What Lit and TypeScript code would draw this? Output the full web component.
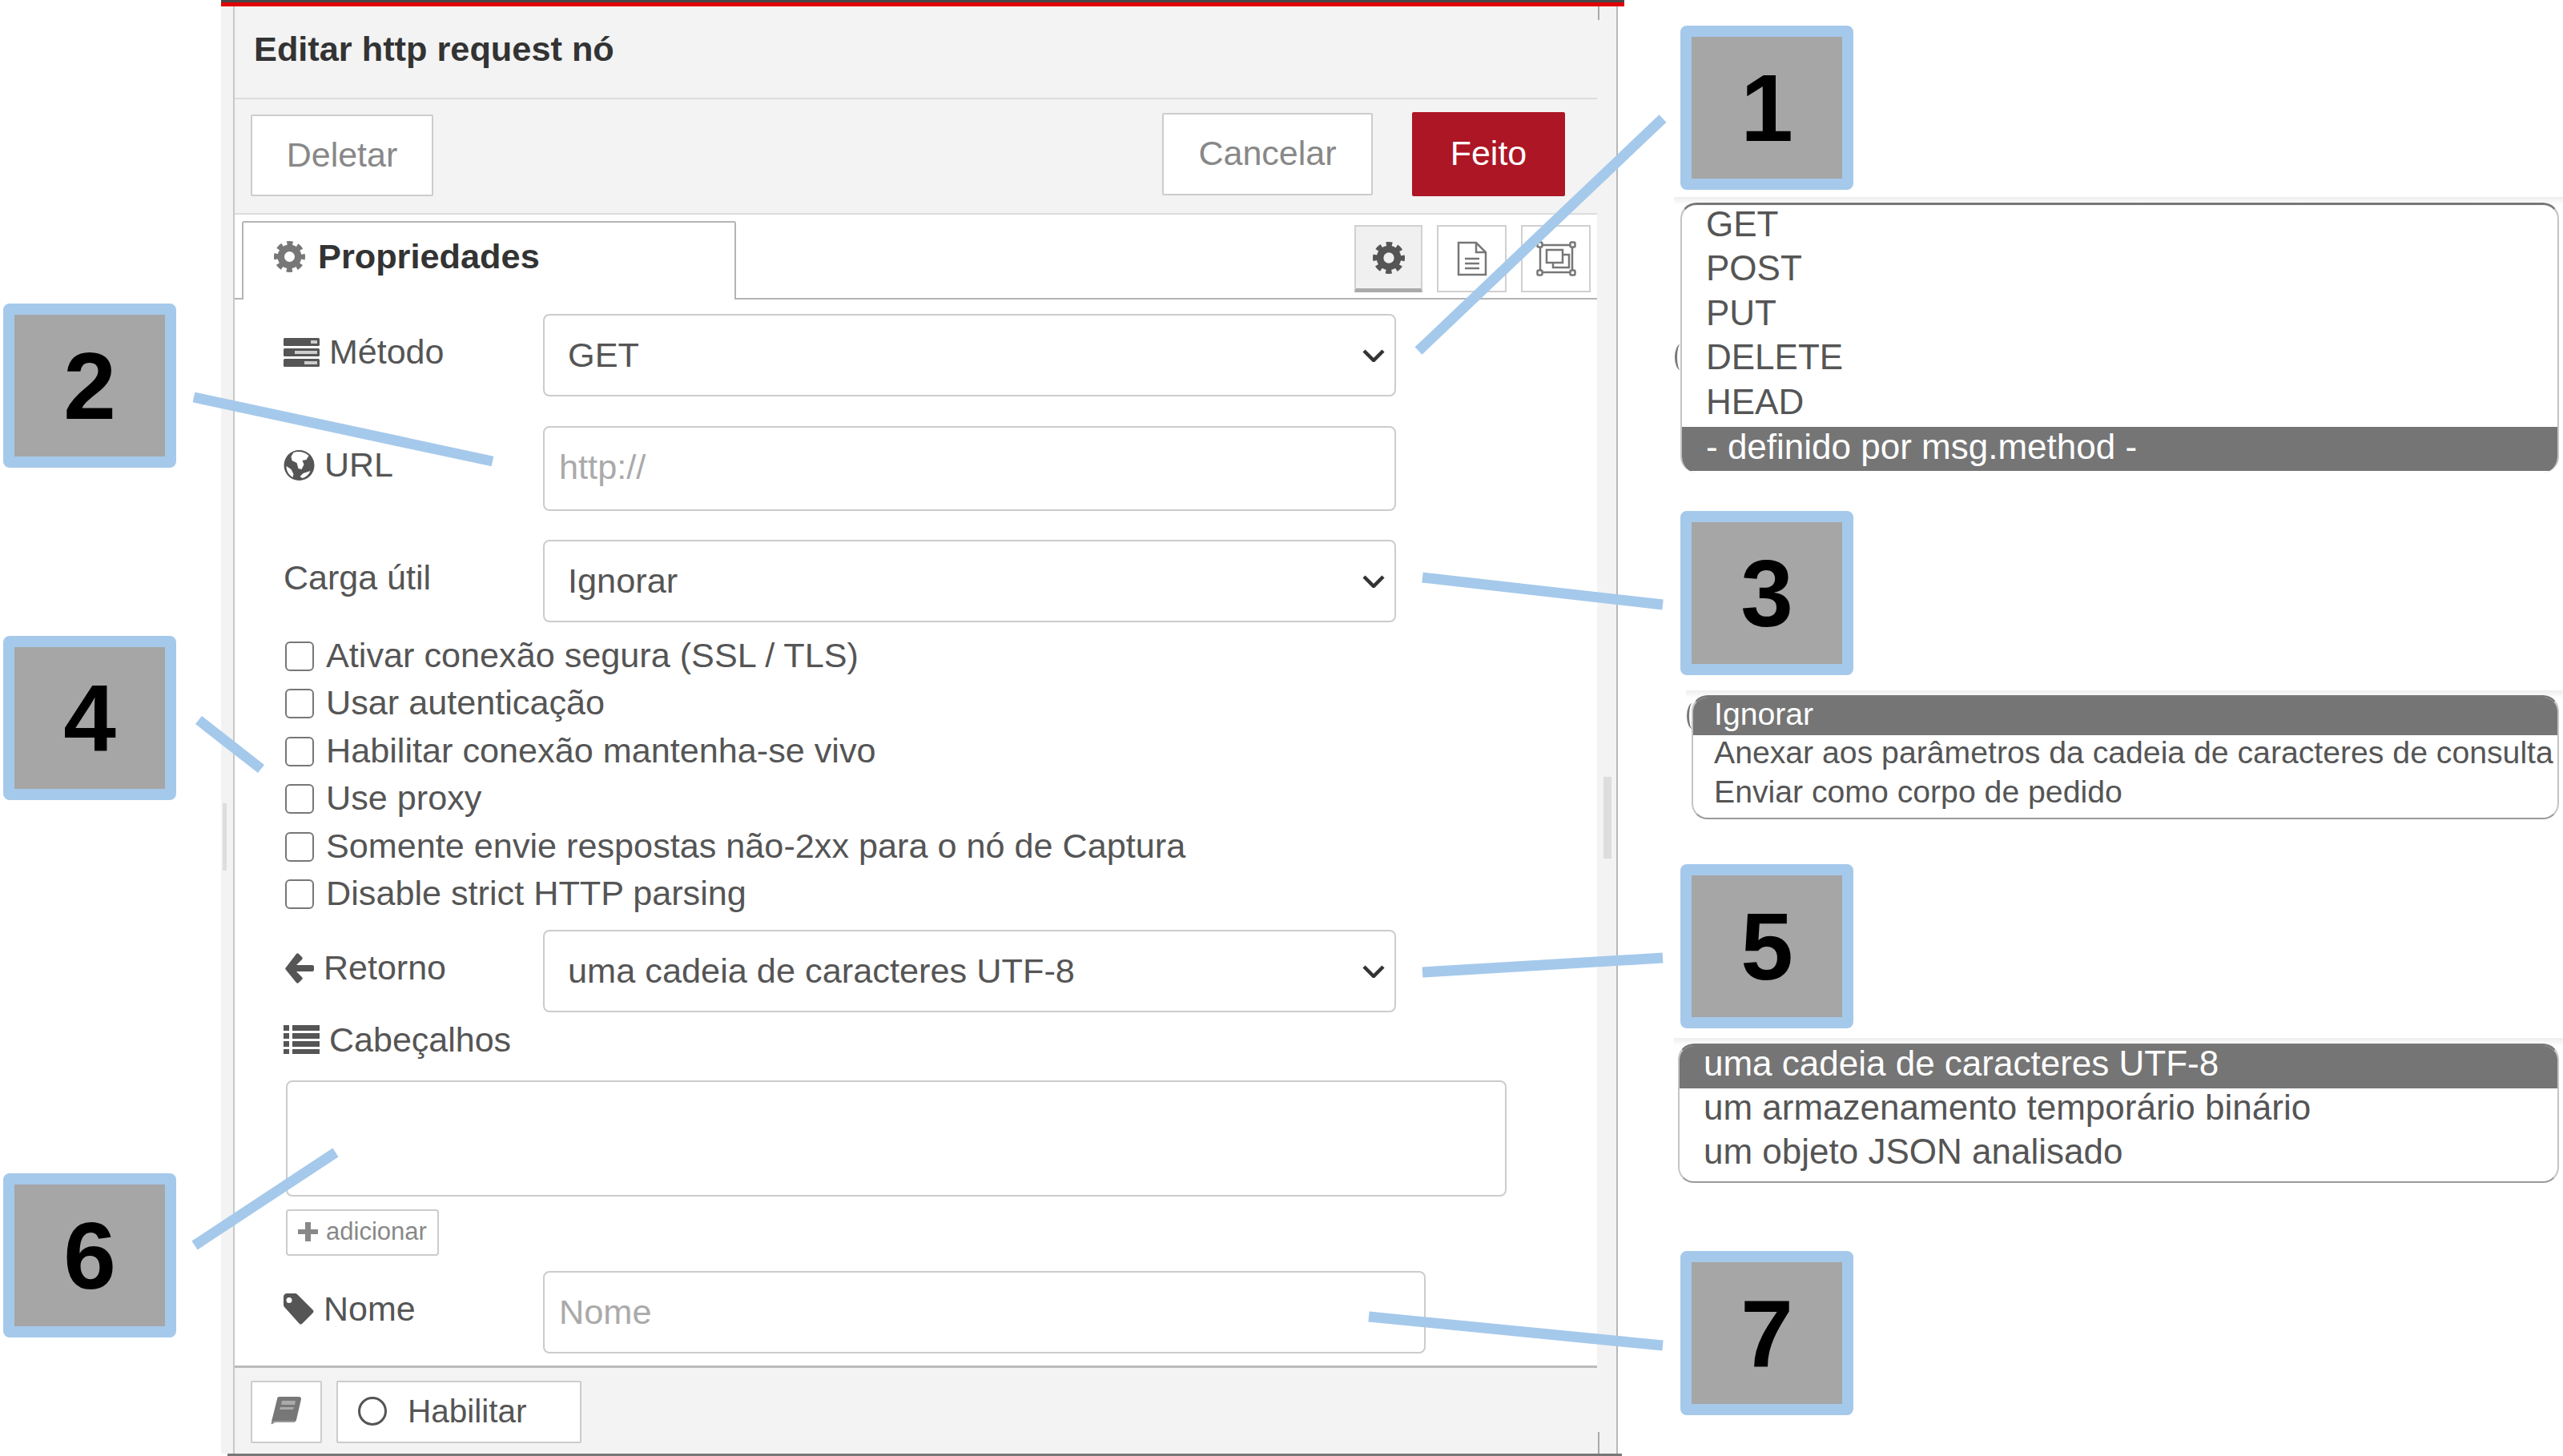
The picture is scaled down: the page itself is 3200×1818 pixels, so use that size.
import { LitElement, html, css } from 'lit'
import { customElement } from 'lit/decorators.js'

const gear = (cls: string) => html`<svg class=${cls} viewBox="0 0 24 24">
  <circle cx="12" cy="12" r="6.6" fill="none" stroke="currentColor" stroke-width="5.2" />
  <circle cx="12" cy="12" r="10.2" fill="none" stroke="currentColor" stroke-width="3.6" stroke-dasharray="4.4 3.6" stroke-dashoffset="2.2" />
</svg>`

const tasksIcon = html`<svg class="ico tasks" viewBox="0 0 45 36">
  <rect y="0" width="45" height="10" rx="1.5" fill="#555" />
  <rect x="34" y="3" width="8" height="4" fill="#ccc" />
  <rect y="13" width="45" height="10" rx="1.5" fill="#555" />
  <rect x="14" y="16" width="28" height="4" fill="#ccc" />
  <rect y="26" width="45" height="10" rx="1.5" fill="#555" />
  <rect x="26" y="29" width="16" height="4" fill="#ccc" />
</svg>`

const globeIcon = html`<svg class="ico globe" viewBox="0 0 38 38">
  <circle cx="19" cy="19" r="19" fill="#555" />
  <path d="M12 3c6-2 14-1 19 4l-3 5-5 1 2 5-3 6-4-1-2-7-6-3-1-5zM24 29l6-2 3-1c-2 5-6 8-10 9l-3-2zM3 20l6 4 3 6-1 4C6 31 3 26 3 20z" fill="#fff" />
</svg>`

const arrowIcon = html`<svg class="ico arrow" viewBox="0 0 36 38">
  <path d="M17 1l4 4c1 1 1 2 0 3l-7 7h20c1 0 2 1 2 2v4c0 1-1 2-2 2H14l7 7c1 1 1 2 0 3l-4 4c-1 1-2 1-3 0L1 21c-1-1-1-2 0-3L14 1c1-1 2-1 3 0z" fill="#555" />
</svg>`

const listIcon = html`<svg class="ico tasks" viewBox="0 0 45 36">
  <path d="M0 0h7v7H0zM11 0h34v7H11zM0 10h7v7H0zM11 10h34v7H11zM0 20h7v7H0zM11 20h34v7H11zM0 30h7v6H0zM11 30h34v6H11z" fill="#555" />
</svg>`

const tagIcon = html`<svg class="ico tag" viewBox="0 0 38 39">
  <path d="M4 0h11c1 0 2 1 3 2l18 18c2 2 2 3 0 5L24 37c-2 2-3 2-5 0L2 18c-1-1-2-2-2-4V4c0-2 2-4 4-4zm3 5a3.5 3.5 0 1 0 0 7 3.500 3.500 0 0 0 0-7z" fill="#555" fill-rule="evenodd" />
</svg>`

const options = [
  'Ativar conexão segura (SSL / TLS)',
  'Usar autenticação',
  'Habilitar conexão mantenha-se vivo',
  'Use proxy',
  'Somente envie respostas não-2xx para o nó de Captura',
  'Disable strict HTTP parsing',
]

@customElement('app-root')
export class AppRoot extends LitElement {
  static styles = css`
    :host {
      display: block;
      width: 3200px;
      height: 1818px;
      background: #fff;
      font-family: 'Liberation Sans', Arial, sans-serif;
      color: #555;
      overflow: hidden;
    }

    * {
      box-sizing: border-box;
    }

    .page {
      position: relative;
      display: flex;
      width: 3200px;
      height: 1818px;
    }

    /* numbered callouts */
    .callout {
      width: 216px;
      height: 205px;
      flex: none;
      display: flex;
      align-items: center;
      justify-content: center;
      background: #a6a6a6;
      border: 14px solid #a5c9eb;
      border-radius: 8px;
      color: #000;
      font-size: 118px;
      font-weight: 700;
    }

    .left {
      width: 276px;
      flex: none;
      padding: 379px 0 0 4px;
    }

    .left .callout + .callout {
      margin-top: 210px;
    }

    .left .callout.six {
      margin-top: 466px;
    }

    .right {
      flex: 1;
      min-width: 0;
      display: flex;
      flex-direction: column;
      padding-top: 32px;
    }

    .right .callout {
      margin-left: 70px;
    }

    /* the panel */
    .shell {
      width: 1752px;
      flex: none;
      display: flex;
      flex-direction: column;
    }

    .topbar {
      height: 8px;
      flex: none;
      background: #e00000;
      border-top: 3px solid #474747;
    }

    .frame {
      position: relative;
      flex: 1;
      min-height: 0;
      width: 1744px;
      display: flex;
      padding: 0 24px 0 15px;
      background: #f3f3f3;
      border-right: 2px solid #b8b8b8;
    }

    .bottomline {
      height: 3px;
      flex: none;
      margin: 0 3px 0 8px;
      background: #777;
    }

    .thumb {
      position: absolute;
      background: #ddd;
    }

    .thumb.l {
      left: 2px;
      top: 995px;
      width: 5px;
      height: 84px;
    }

    .thumb.r {
      left: 1726px;
      top: 962px;
      width: 10px;
      height: 102px;
    }

    .tick {
      position: absolute;
      left: 1719px;
      width: 2px;
      background: #aaa;
    }

    .tick.up {
      top: 0;
      height: 17px;
    }

    .tick.down {
      bottom: 0;
      height: 27px;
    }

    .main {
      flex: 1;
      min-width: 0;
      display: flex;
      flex-direction: column;
      border-left: 2px solid #c8c8c8;
    }

    .title {
      height: 116px;
      flex: none;
      padding: 0 0 8px 24px;
      display: flex;
      align-items: center;
      border-bottom: 2px solid #dcdcdc;
      font-size: 43.3px;
      font-weight: 700;
      color: #333;
    }

    .toolbar {
      height: 144px;
      flex: none;
      display: flex;
      align-items: center;
      padding: 0 40px 2px 20px;
      border-bottom: 2px solid #dcdcdc;
    }

    .btn {
      display: flex;
      align-items: center;
      justify-content: center;
      padding-bottom: 2px;
      background: #fff;
      border: 2px solid #ccc;
      border-radius: 2px;
      font-size: 43px;
      color: #888;
    }

    .del {
      width: 228px;
      height: 102px;
    }

    .actions {
      margin-left: auto;
      margin-top: -4px;
      display: flex;
      align-items: center;
      gap: 49px;
    }

    .cancel {
      width: 263px;
      height: 103px;
    }

    .done {
      width: 191px;
      height: 105px;
      background: #ad1625;
      border: none;
      color: #fff;
    }

    .tabs {
      height: 106px;
      flex: none;
      display: flex;
      padding: 0 8px 0 9px;
      background: #fff;
      border-bottom: 2px solid #b4b4b4;
    }

    .tab {
      width: 617px;
      height: 98px;
      margin-top: 8px;
      padding: 0 0 12px 38px;
      display: flex;
      align-items: center;
      gap: 16px;
      background: #fff;
      border: 2px solid #b4b4b4;
      border-bottom: none;
      border-radius: 3px 3px 0 0;
      font-size: 43.3px;
      font-weight: 700;
      color: #333;
    }

    .tab-gear {
      width: 39px;
      height: 39px;
      color: #777;
    }

    .side {
      margin-left: auto;
      margin-top: 13px;
      display: flex;
      gap: 18px;
      height: 84px;
    }

    .side-btn {
      width: 87px;
      display: flex;
      align-items: center;
      justify-content: center;
      background: #fff;
      border: 2px solid #d0d0d0;
      color: #777;
    }

    .side-btn.on {
      width: 85px;
      background: #f0f0f0;
      border-bottom: 5px solid #aaa;
      color: #555;
    }

    .side-gear {
      width: 40px;
      height: 40px;
    }

    .side-doc {
      width: 38px;
      height: 44px;
    }

    .side-grp {
      width: 50px;
      height: 44px;
    }

    /* form */
    .form {
      flex: 1;
      min-height: 0;
      padding: 18px 0 0 61px;
      background: #fff;
    }

    .row {
      display: flex;
      align-items: center;
    }

    .row + .row {
      margin-top: 36px;
    }

    .label {
      width: 324px;
      flex: none;
      display: flex;
      align-items: center;
      gap: 12px;
      padding-bottom: 8px;
      font-size: 43px;
      color: #555;
    }

    .ico {
      flex: none;
    }

    .tasks {
      width: 45px;
      height: 36px;
    }

    .globe {
      width: 39px;
      height: 38px;
    }

    .arrow {
      width: 36px;
      height: 38px;
      margin-left: 2px;
    }

    .tag {
      width: 38px;
      height: 39px;
    }

    .field {
      width: 1065px;
      height: 103px;
      flex: none;
      display: flex;
      align-items: center;
      justify-content: space-between;
      padding: 0 11px 0 29px;
      background: #fff;
      border: 2px solid #ccc;
      border-radius: 8px;
      font-size: 43.3px;
      color: #555;
    }

    .field.url {
      height: 106px;
      margin-top: 1px;
      padding-bottom: 4px;
    }

    .field.input {
      padding-left: 18px;
      color: #aaa;
    }

    .field.name {
      width: 1102px;
    }

    .chev {
      width: 30px;
      height: 16px;
      fill: none;
      stroke: #333;
      stroke-width: 4.5;
    }

    .checks {
      margin: 24px 0 4px 2px;
    }

    .check {
      height: 59.4px;
      display: flex;
      align-items: flex-start;
      gap: 15px;
      font-size: 43.2px;
      line-height: 34px;
      color: #555;
    }

    .box {
      width: 36px;
      height: 37px;
      flex: none;
      background: #fff;
      border: 2px solid #777;
      border-radius: 6px;
    }

    .check span {
      height: 36px;
    }

    .head {
      margin-top: 16px;
      height: 36px;
      display: flex;
      align-items: center;
      gap: 12px;
      font-size: 43px;
    }

    .kv {
      width: 1524px;
      height: 145px;
      margin: 33px 0 0 3px;
      background: #fff;
      border: 2px solid #ccc;
      border-radius: 8px;
    }

    .add {
      width: 191px;
      height: 58px;
      margin: 16px 0 19px 3px;
      gap: 10px;
      border-radius: 4px;
      font-size: 31px;
    }

    .plus {
      width: 25px;
      height: 26px;
      fill: #888;
    }

    /* footer */
    .foot {
      height: 110px;
      flex: none;
      display: flex;
      gap: 18px;
      padding: 16px 0 0 20px;
      border-top: 3px solid #bbb;
    }

    .foot .btn {
      height: 78px;
      color: #555;
    }

    .book-btn {
      width: 89px;
    }

    .book {
      width: 40px;
      height: 38px;
    }

    .foot .enable {
      width: 306px;
      justify-content: flex-start;
      gap: 26px;
      padding-left: 25px;
      font-size: 40.5px;
    }

    .ring {
      width: 36px;
      height: 36px;
      border: 3px solid #555;
      border-radius: 50%;
    }

    /* option lists */
    .dd {
      position: relative;
      height: 344px;
      margin: 9px 0 0 62px;
      padding: 7px 5px 0 8px;
      background: linear-gradient(#eee, #fff 10px);
    }

    .dd.pay {
      height: 164px;
      margin: 19px 0 0 77px;
      padding: 6px 5px 3px 7px;
    }

    .dd.ret {
      height: 182px;
      margin: 12px 0 0 62px;
      padding: 7px 5px 1px 5px;
    }

    /* edge of the form showing past the cropped list */
    .sliver {
      position: absolute;
      left: 1px;
      width: 14px;
      height: 32px;
      border-left: 3px solid #777;
      border-radius: 50%;
    }

    .method .sliver {
      top: 184px;
    }

    .pay .sliver {
      top: 16px;
    }

    .list {
      position: relative;
      height: 100%;
      overflow: hidden;
      background: #fff;
      border: 2px solid #c4c4c4;
      border-top: 3px solid #777;
      border-radius: 20px;
      color: #555;
    }

    .dd.method .list {
      border-bottom: none;
      font-size: 44px;
      padding: 0 0 0 30px;
    }

    .opt {
      height: 55.5px;
      display: flex;
      align-items: center;
      white-space: nowrap;
    }

    .method .opt:first-child {
      margin-top: -4px;
    }

    .method .sel {
      margin: 3px 0 0 -30px;
      padding-left: 30px;
      height: 55px;
      padding-bottom: 5px;
    }

    .sel {
      background: #757575;
      color: #fff;
    }

    .pay .list {
      font-size: 39.2px;
      border-top-color: #777;
      border-bottom-color: #999;
    }

    .pay .opt {
      height: 48.5px;
      padding-left: 26px;
      padding-bottom: 4px;
    }

    .pay .sel {
      height: 47px;
      padding-bottom: 6px;
    }

    .ret .list {
      font-size: 44px;
      border-bottom-color: #999;
    }

    .ret .opt {
      height: 55px;
      padding-left: 30px;
      padding-bottom: 8px;
    }

    .ret .sel {
      height: 53px;
      padding-bottom: 10px;
    }

    .callout.three {
      margin-top: 48px;
    }

    .callout.five {
      margin-top: 53px;
    }

    .callout.seven {
      margin-top: 84px;
    }

    .leaders {
      position: absolute;
      left: 0;
      top: 0;
      width: 3200px;
      height: 1818px;
      pointer-events: none;
      stroke: #a5c9eb;
      stroke-width: 13;
    }
  `

  render() {
    const chev = html`<svg class="chev" viewBox="0 0 30 16"><path d="M3 2l12 12L27 2" /></svg>`
    return html`
      <div class="page">
        <div class="left">
          <div class="callout">2</div>
          <div class="callout">4</div>
          <div class="callout six">6</div>
        </div>

        <div class="shell">
          <div class="topbar"></div>
          <div class="frame">
            <div class="thumb l"></div>
            <div class="thumb r"></div>
            <div class="tick up"></div>
            <div class="tick down"></div>
            <div class="main">
              <div class="title">Editar http request nó</div>
              <div class="toolbar">
                <div class="btn del">Deletar</div>
                <div class="actions">
                  <div class="btn cancel">Cancelar</div>
                  <div class="btn done">Feito</div>
                </div>
              </div>
              <div class="tabs">
                <div class="tab">${gear('tab-gear')}<span>Propriedades</span></div>
                <div class="side">
                  <div class="side-btn on">${gear('side-gear')}</div>
                  <div class="side-btn">
                    <svg class="side-doc" viewBox="0 0 38 44" fill="none" stroke="#777" stroke-width="2.5">
                      <path d="M2 2h22l12 12v28H2zM24 2v12h12M10 22h18M10 28h18M10 34h18" />
                    </svg>
                  </div>
                  <div class="side-btn">
                    <svg class="side-grp" viewBox="0 0 50 44" fill="none" stroke="#777" stroke-width="2.5">
                      <path d="M5 5h40v34H5z" />
                      <rect x="1.5" y="1.5" width="6" height="6" rx="1.5" fill="#fff" />
                      <rect x="42.5" y="1.5" width="6" height="6" rx="1.5" fill="#fff" />
                      <rect x="1.5" y="36.5" width="6" height="6" rx="1.5" fill="#fff" />
                      <rect x="42.5" y="36.5" width="6" height="6" rx="1.5" fill="#fff" />
                      <path d="M13 11h20v16H13zM21 27v6h20V17h-8" />
                    </svg>
                  </div>
                </div>
              </div>

              <div class="form">
                <div class="row">
                  <div class="label">${tasksIcon}<span>Método</span></div>
                  <div class="field"><span>GET</span>${chev}</div>
                </div>
                <div class="row">
                  <div class="label">${globeIcon}<span>URL</span></div>
                  <div class="field url input">http://</div>
                </div>
                <div class="row">
                  <div class="label">Carga útil</div>
                  <div class="field"><span>Ignorar</span>${chev}</div>
                </div>

                <div class="checks">
                  ${options.map(
                    (o) => html`<div class="check"><div class="box"></div><span>${o}</span></div>`
                  )}
                </div>

                <div class="row">
                  <div class="label">${arrowIcon}<span>Retorno</span></div>
                  <div class="field"><span>uma cadeia de caracteres UTF-8</span>${chev}</div>
                </div>

                <div class="head">${listIcon}<span>Cabeçalhos</span></div>
                <div class="kv"></div>
                <div class="btn add">
                  <svg class="plus" viewBox="0 0 25 26"><path d="M9 1h7v9h9v6h-9v9H9v-9H0v-6h9z" /></svg>
                  <span>adicionar</span>
                </div>

                <div class="row">
                  <div class="label">${tagIcon}<span>Nome</span></div>
                  <div class="field name input">Nome</div>
                </div>
              </div>

              <div class="foot">
                <div class="btn book-btn">
                  <svg class="book" viewBox="0 0 40 38">
                    <path d="M11 1h24c2 0 3 1 3 3l-6 26c-1 2-2 3-4 3H6c-2 0-3 1-3 2H1c0-2 0-4 1-7l6-24c0-2 1-3 3-3z" fill="#777" />
                    <path d="M14 6h17l-1 5H13zM12 14h17l-1 3H11z" fill="#aaa" />
                    <path d="M1 35c1-2 3-3 5-3h24" fill="none" stroke="#999" stroke-width="2" />
                  </svg>
                </div>
                <div class="btn enable"><div class="ring"></div><span>Habilitar</span></div>
              </div>
            </div>
          </div>
          <div class="bottomline"></div>
        </div>

        <div class="right">
          <div class="callout">1</div>
          <div class="dd method">
            <div class="sliver"></div>
            <div class="list">
              <div class="opt">GET</div>
              <div class="opt">POST</div>
              <div class="opt">PUT</div>
              <div class="opt">DELETE</div>
              <div class="opt">HEAD</div>
              <div class="opt sel">- definido por msg.method -</div>
            </div>
          </div>

          <div class="callout three">3</div>
          <div class="dd pay">
            <div class="sliver"></div>
            <div class="list">
              <div class="opt sel">Ignorar</div>
              <div class="opt">Anexar aos parâmetros da cadeia de caracteres de consulta</div>
              <div class="opt">Enviar como corpo de pedido</div>
            </div>
          </div>

          <div class="callout five">5</div>
          <div class="dd ret">
            <div class="list">
              <div class="opt sel">uma cadeia de caracteres UTF-8</div>
              <div class="opt">um armazenamento temporário binário</div>
              <div class="opt">um objeto JSON analisado</div>
            </div>
          </div>

          <div class="callout seven">7</div>
        </div>

        <svg class="leaders" viewBox="0 0 3200 1818">
          <line x1="1771" y1="438" x2="2076" y2="148" />
          <line x1="242" y1="496" x2="615" y2="576" />
          <line x1="1776" y1="721" x2="2076" y2="755" />
          <line x1="248" y1="899" x2="326" y2="960" />
          <line x1="1776" y1="1214" x2="2076" y2="1196" />
          <line x1="243" y1="1555" x2="419" y2="1439" />
          <line x1="1709" y1="1644" x2="2076" y2="1680" />
        </svg>
      </div>
    `
  }
}
